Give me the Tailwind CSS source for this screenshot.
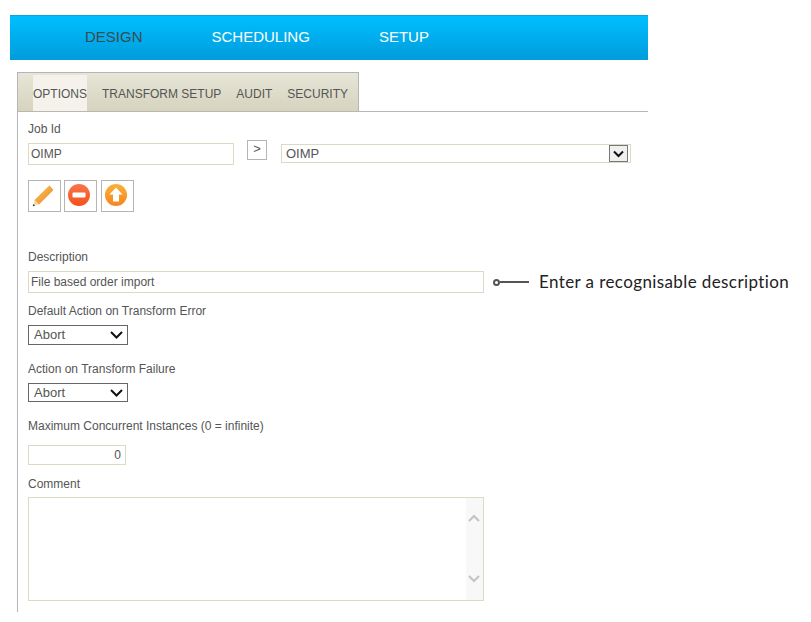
<!DOCTYPE html>
<html lang="en">
<head>
    <meta charset="UTF-8">
    <title>Job Options</title>
    <script src="https://cdn.jsdelivr.net/npm/@tailwindcss/browser@4"></script>
</head>
<body class="bg-white font-['Liberation_Sans',Arial,sans-serif] text-xs text-[#555]">
    <div class="ml-[10px] pt-[15px] w-[638px]">
        <!-- top nav -->
        <nav class="h-[45px] pl-[75px] pb-[3px] flex items-center gap-[69px] text-[15px] text-white border-t border-[#0aa5dc] bg-gradient-to-b from-[#00bfff] to-[#009cdb]">
            <a class="text-[#3d4a50]">DESIGN</a>
            <a>SCHEDULING</a>
            <a>SETUP</a>
        </nav>

        <div class="ml-[7px] mt-[12px]">
            <!-- tabs -->
            <div class="border-b border-[#b8b8b0]">
                <div class="w-[342px] h-[39px] pt-[2px] pl-[15px] flex gap-[15px] border border-b-0 border-[#b5b5b5] bg-gradient-to-b from-[#e6e5d7] to-[#d6d4bf]">
                    <a class="h-[36px] pt-px -mb-px flex items-center bg-[#f4f2ea]">OPTIONS</a>
                    <a class="h-[36px] pt-px flex items-center">TRANSFORM SETUP</a>
                    <a class="h-[36px] pt-px flex items-center">AUDIT</a>
                    <a class="h-[36px] pt-px flex items-center">SECURITY</a>
                </div>
            </div>

            <!-- form -->
            <div class="border-l border-[#b5b5b5] pl-[10px] pt-[10px] h-[500px]">
                <label class="block h-[14px] leading-[14px]">Job Id</label>
                <div class="mt-[4px] flex items-start">
                    <input type="text" value="OIMP" class="mt-[3px] w-[206px] h-[22px] px-[2px] border border-[#dcd9c4] text-xs text-[#555]">
                    <button class="ml-[13px] w-[20px] h-[20px] border border-[#b5b5b5] text-[13px] leading-none pb-[3px]">&gt;</button>
                    <div class="relative ml-[14px] mt-[4px] w-[350px] h-[19px]">
                        <select class="appearance-none w-full h-full px-[4px] border border-[#dcd9c4] text-[13px] leading-none text-[#555]"><option>OIMP</option></select>
                        <span class="absolute right-[3px] top-[1px] w-[19px] h-[17px] flex items-center justify-center bg-[#f0f0f0] border border-[#777]">
                            <svg width="11" height="8" viewBox="0 0 11 8"><path d="M1 1.500l4.500 4.500 4.500-4.500" fill="none" stroke="#111" stroke-width="2"/></svg>
                        </span>
                    </div>
                </div>

                <!-- action buttons -->
                <div class="mt-[15px] flex">
                    <button class="w-[33px] h-[32px] pr-[4px] flex items-center justify-center border border-[#b5b5b5]">
                        <svg width="22" height="22" viewBox="0 0 24 24">
                            <defs><linearGradient id="pen" x1="0" y1="0" x2="1" y2="1"><stop offset="0" stop-color="#fbc25a"/><stop offset="1" stop-color="#ee8a1c"/></linearGradient></defs>
                            <path d="M19 1l4 4.500L7.500 21 3 16.500z" fill="url(#pen)" stroke="#e8891d" stroke-width=".6"/>
                            <path d="M3 16.500L.8 23.300 7.500 21z" fill="#f3d9ae"/>
                            <path d="M1.600 20.800L.8 23.300l2.500-.8z" fill="#333"/>
                        </svg>
                    </button>
                    <button class="ml-[3px] w-[33px] h-[32px] pr-[3px] pb-[2px] flex items-center justify-center border border-[#b5b5b5]">
                        <svg width="24" height="24" viewBox="0 0 24 24">
                            <defs><linearGradient id="red" x1="0" y1="0" x2="0" y2="1"><stop offset="0" stop-color="#f8764a"/><stop offset="1" stop-color="#f4511c"/></linearGradient></defs>
                            <circle cx="12" cy="12" r="11" fill="url(#red)"/>
                            <rect x="5.500" y="9.500" width="13" height="5" rx="1" fill="#fff"/>
                        </svg>
                    </button>
                    <button class="ml-[4px] w-[33px] h-[32px] pr-[3px] pb-[2px] flex items-center justify-center border border-[#b5b5b5]">
                        <svg width="24" height="24" viewBox="0 0 24 24">
                            <defs><linearGradient id="org" x1="0" y1="0" x2="0" y2="1"><stop offset="0" stop-color="#fbb03b"/><stop offset="1" stop-color="#f5861f"/></linearGradient></defs>
                            <circle cx="12" cy="12" r="11" fill="url(#org)"/>
                            <path d="M12 4.500l6.500 7H15v7H9v-7H5.500z" fill="#fff"/>
                        </svg>
                    </button>
                </div>

                <label class="block mt-[38px] h-[14px] leading-[14px]">Description</label>
                <div class="mt-[7px] h-[22px] flex items-center">
                    <input type="text" value="File based order import" class="shrink-0 w-[456px] h-[22px] px-[2px] border border-[#dcd9c4] text-xs text-[#555]">
                    <span class="shrink-0 ml-[9px] w-[7px] h-[7px] rounded-full border-2 border-[#555]"></span>
                    <span class="shrink-0 w-[29px] h-[2px] bg-[#555]"></span>
                    <span class="ml-[10px] whitespace-nowrap font-['Lato',sans-serif] text-[17px] tracking-[.4px] text-[#222]">Enter a recognisable description</span>
                </div>

                <label class="block mt-[11px] h-[14px] leading-[14px]">Default Action on Transform Error</label>
                <div class="relative mt-[7px] w-[100px] h-[20px]">
                    <select class="appearance-none w-full h-full px-[5px] pb-[2px] border border-[#666] text-[13px] leading-none text-[#555]"><option>Abort</option></select>
                    <svg class="absolute right-[5px] top-[6px]" width="13" height="8" viewBox="0 0 13 8"><path d="M1 1l5.500 5.500L12 1" fill="none" stroke="#111" stroke-width="2"/></svg>
                </div>

                <label class="block mt-[17px] h-[14px] leading-[14px]">Action on Transform Failure</label>
                <div class="relative mt-[7px] w-[100px] h-[19px]">
                    <select class="appearance-none w-full h-full px-[5px] border border-[#666] text-[13px] leading-none text-[#555]"><option>Abort</option></select>
                    <svg class="absolute right-[5px] top-[6px]" width="13" height="8" viewBox="0 0 13 8"><path d="M1 1l5.500 5.500L12 1" fill="none" stroke="#111" stroke-width="2"/></svg>
                </div>

                <label class="block mt-[17px] h-[14px] leading-[14px]">Maximum Concurrent Instances (0 = infinite)</label>
                <input type="text" value="0" class="block mt-[12px] w-[98px] h-[20px] px-[4px] text-right border border-[#dcd9c4] text-xs text-[#555]">

                <label class="block mt-[12px] h-[14px] leading-[14px]">Comment</label>
                <div class="relative mt-[6px] w-[456px] h-[104px]">
                    <textarea class="block w-full h-full resize-none border border-[#dcd9c4]"></textarea>
                    <div class="absolute right-px top-px bottom-px w-[17px] flex flex-col justify-between items-center pt-[16px] pb-[17px] pr-[2px] bg-[#f8f8f8]">
                        <svg width="12" height="8" viewBox="0 0 12 8"><path d="M1 7l5-5 5 5" fill="none" stroke="#c4c4c4" stroke-width="2.200"/></svg>
                        <svg width="12" height="8" viewBox="0 0 12 8"><path d="M1 1l5 5 5-5" fill="none" stroke="#c4c4c4" stroke-width="2.200"/></svg>
                    </div>
                </div>
            </div>
        </div>
    </div>
</body>
</html>
